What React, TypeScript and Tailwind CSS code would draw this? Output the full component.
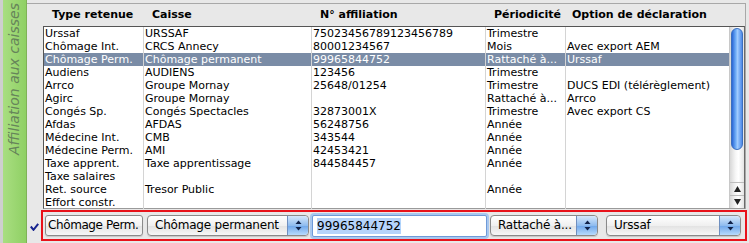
import React from "react";

const rows: string[][] = [
  ["Urssaf", "URSSAF", "75023456789123456789", "Trimestre", ""],
  ["Chômage Int.", "CRCS Annecy", "80001234567", "Mois", "Avec export AEM"],
  ["Chômage Perm.", "Chômage permanent", "99965844752", "Rattaché à...", "Urssaf"],
  ["Audiens", "AUDIENS", "123456", "Trimestre", ""],
  ["Arrco", "Groupe Mornay", "25648/01254", "Trimestre", "DUCS EDI (télérèglement)"],
  ["Agirc", "Groupe Mornay", "", "Rattaché à...", "Arrco"],
  ["Congés Sp.", "Congés Spectacles", "32873001X", "Trimestre", "Avec export CS"],
  ["Afdas", "AFDAS", "56248756", "Année", ""],
  ["Médecine Int.", "CMB", "343544", "Année", ""],
  ["Médecine Perm.", "AMI", "42453421", "Année", ""],
  ["Taxe apprent.", "Taxe apprentissage", "844584457", "Année", ""],
  ["Taxe salaires", "", "", "", ""],
  ["Ret. source", "Tresor Public", "", "Année", ""],
  ["Effort constr.", "", "", "", ""],
];

const colW = ["w-[100px]", "w-[168px]", "w-[174px]", "w-[80px]", "w-[162px]"];
const headers = ["Type retenue", "Caisse", "N° affiliation", "Périodicité", "Option de déclaration"];
const headerPad = ["pl-[8px]", "pl-[8px]", "pl-[8px]", "pl-[8px]", "pl-[6px]"];

const font = { fontFamily: '"DejaVu Sans", "Liberation Sans", sans-serif' } as const;

function Arrows() {
  return (
    <div className="h-full w-[21px] shrink-0 rounded-r-[4px] border-l border-[#6f8fbf] bg-[linear-gradient(#d6e8fb,#8fbcef_50%,#6ea6ea_51%,#b7dafc)] flex items-center justify-center">
      <svg width="7" height="11" viewBox="0 0 7 11">
        <path d="M3.5 0.5 L6.5 4 L0.5 4 Z" fill="#10224a" />
        <path d="M3.5 10.5 L6.5 7 L0.5 7 Z" fill="#10224a" />
      </svg>
    </div>
  );
}

function Popup({ label, w }: { label: string; w: string }) {
  return (
    <div className={`${w} h-[21px] shrink-0 flex items-stretch rounded-[4px] border border-[#8a8a8a] bg-[linear-gradient(#ffffff,#f0f0f0_50%,#e2e2e2_51%,#f7f7f7)] shadow-[0_1px_1px_rgba(0,0,0,0.15)]`}>
      <div className="flex-1 pl-[7px] text-[12px] tracking-[-0.2px] leading-[19px] text-black whitespace-nowrap overflow-hidden">{label}</div>
      <Arrows />
    </div>
  );
}

export default function App() {
  return (
    <div className="w-[749px] h-[243px] bg-[#e8e8e8] flex overflow-hidden" style={font}>
      {/* left green tab */}
      <div className="w-[27px] h-full shrink-0 flex">
        <div className="w-[3px] h-full bg-[#cfcfcf]" />
        <div className="w-[23px] h-full bg-[linear-gradient(90deg,#a9de81,#8fd064)] flex items-start justify-center overflow-hidden">
          <div
            className="text-[14px] italic text-[#66845a] whitespace-nowrap [writing-mode:vertical-rl] rotate-180 mt-[3px] leading-[23px]"
          >
            Affiliation aux caisses
          </div>
        </div>
        <div className="w-px h-full bg-[#7fb257]" />
      </div>

      {/* main */}
      <div className="flex-1 flex flex-col pt-[3px]">
        <div className="mr-[3px] border-t border-r border-[#a8a8a8] pl-[16px] flex flex-col">
          {/* header */}
          <div className="h-[22px] flex pl-px items-center text-[11px] font-bold text-black">
            {headers.map((h, i) => (
              <div key={i} className={`${colW[i]} ${headerPad[i]} shrink-0 truncate`}>
                {h}
              </div>
            ))}
          </div>
          {/* table */}
          <div className="h-[183px] border-t border-l border-r border-b border-t-[#555] border-l-[#555] border-r-[#6a6a6a] border-b-[#9a9a9a] bg-white flex">
            <div className="flex flex-col flex-1">
              {rows.map((r, ri) => {
                const sel = ri === 2;
                return (
                  <div
                    key={ri}
                    className={`h-[13px] flex text-[11px] leading-[13px] ${sel ? "bg-[#7a8ca6] text-white" : "text-black"}`}
                  >
                    {r.map((c, ci) => (
                      <div
                        key={ci}
                        className={`${colW[ci]} shrink-0 pl-px whitespace-nowrap overflow-hidden ${ci < 4 ? "border-r border-[#d4d4d4]" : ""} ${sel && ci < 4 ? "border-[#8b9bb2]" : ""}`}
                      >
                        {c}
                      </div>
                    ))}
                  </div>
                );
              })}
            </div>
            {/* scrollbar */}
            <div className="w-[15px] shrink-0 h-full flex flex-col bg-[linear-gradient(90deg,#d8d8d8,#f6f6f6_40%,#ffffff_60%,#e4e4e4)] border-l border-[#c8c8c8]">
              <div className="mt-px mx-[1px] h-[122px] rounded-[7px] border border-[#3a6fbf] bg-[linear-gradient(90deg,#2a66d6,#6aa9f5_35%,#9fcbff_55%,#4d8ae8)]" />
              <div className="flex-1" />
              <div className="h-[13px] flex items-center justify-center border-t border-[#bdbdbd]">
                <svg width="7" height="6" viewBox="0 0 7 6"><path d="M3.5 0 L7 6 L0 6 Z" fill="#222" /></svg>
              </div>
              <div className="h-[13px] flex items-center justify-center border-t border-[#bdbdbd]">
                <svg width="7" height="6" viewBox="0 0 7 6"><path d="M0 0 L7 0 L3.5 6 Z" fill="#222" /></svg>
              </div>
            </div>
          </div>
        </div>

        {/* bottom edit bar */}
        <div className="flex items-center mt-[1px]">
          <div className="w-[13px] flex justify-end pr-[1px] pt-[2px]">
            <svg width="9" height="8" viewBox="0 0 9 8">
              <path d="M0.8 3.5 L3.5 6.8 L8.2 0.8" fill="none" stroke="#17238f" strokeWidth="2" />
            </svg>
          </div>
          <div className="ml-px w-[706px] h-[31px] border-2 border-[#e8121a] flex items-center pl-[2px] gap-0">
            <div className="w-[98px] h-[21px] shrink-0 rounded-[3px] border border-[#8a8a8a] bg-[linear-gradient(#ffffff,#f1f1f1_50%,#e4e4e4_51%,#f6f6f6)] text-[12px] tracking-[-0.4px] leading-[19px] pl-[2px] text-black whitespace-nowrap shadow-[0_1px_1px_rgba(0,0,0,0.15)]">
              Chômage Perm.
            </div>
            <div className="w-[4px]" />
            <Popup label="Chômage permanent" w="w-[162px]" />
            <div className="w-[3px]" />
            <div className="w-[175px] h-[22px] shrink-0 rounded-[2px] border border-[#6f9ad8] shadow-[0_0_0_2px_#a9c8ef] bg-white flex items-center pl-[4px]">
              <span className="bg-[#b5d3fb] text-[12px] leading-[16px] text-black">99965844752</span>
            </div>
            <div className="w-[3px]" />
            <Popup label="Rattaché à..." w="w-[108px]" />
            <div className="w-[8px]" />
            <Popup label="Urssaf" w="w-[135px]" />
          </div>
        </div>
      </div>
    </div>
  );
}
